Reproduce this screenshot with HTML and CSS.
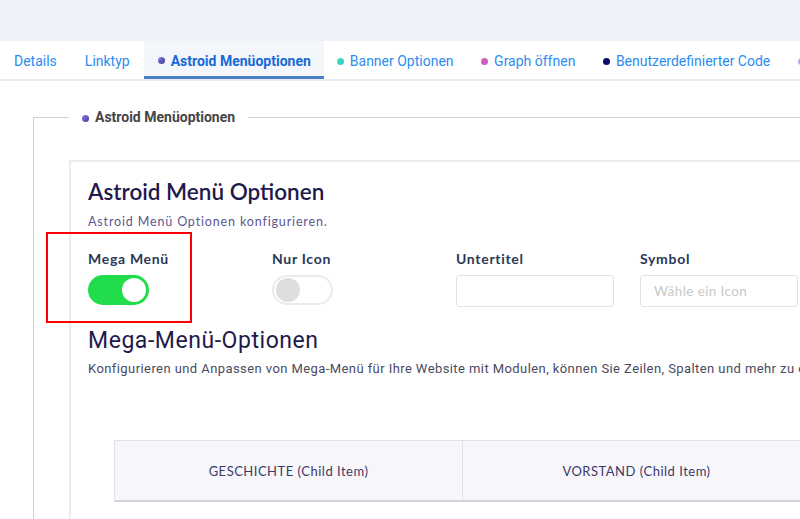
FILE: index.html
```html
<!DOCTYPE html>
<html lang="de">
<head>
  <meta charset="UTF-8" />
  <meta name="viewport" content="width=device-width, initial-scale=1" />
  <title>Menüeintrag bearbeiten</title>
  <link rel="stylesheet" href="styles.css">
</head>
<body>
  <div class="topbar"></div>

  <nav class="tabs">
    <a class="tab">Details</a>
    <a class="tab">Linktyp</a>
    <a class="tab active"><span class="dot dot-astroid"></span>Astroid Menüoptionen</a>
    <a class="tab"><span class="dot dot-banner"></span>Banner Optionen</a>
    <a class="tab"><span class="dot dot-graph"></span>Graph öffnen</a>
    <a class="tab"><span class="dot dot-code"></span>Benutzerdefinierter Code</a>
    <a class="tab"><span class="dot dot-more"></span>Modulzuweisung</a>
  </nav>

  <fieldset class="options">
    <legend><span class="dot dot-astroid"></span>Astroid Menüoptionen</legend>

    <div class="card">
      <h2 class="card-title">Astroid Menü Optionen</h2>
      <p class="card-desc">Astroid Menü Optionen konfigurieren.</p>

      <div class="form-row">
        <div class="field">
          <label>Mega Menü</label>
          <span class="switch on"><span class="knob"></span></span>
          <div class="highlight"></div>
        </div>
        <div class="field">
          <label>Nur Icon</label>
          <span class="switch"><span class="knob"></span></span>
        </div>
        <div class="field">
          <label for="subtitle">Untertitel</label>
          <input type="text" id="subtitle" />
        </div>
        <div class="field">
          <label for="icon">Symbol</label>
          <input type="text" id="icon" placeholder="Wähle ein Icon" />
        </div>
      </div>

      <h2 class="mega-title">Mega-Menü-Optionen</h2>
      <p class="mega-desc">Konfigurieren und Anpassen von Mega-Menü für Ihre Website mit Modulen, können Sie Zeilen, Spalten und mehr zu erstellen.</p>

      <div class="mega-row">
        <div class="mega-cell">GESCHICHTE (Child Item)</div>
        <div class="mega-cell">VORSTAND (Child Item)</div>
      </div>
    </div>
  </fieldset>
</body>
</html>
```

FILE: styles.css
```css
* {
  box-sizing: border-box;
}

html, body {
  overflow: hidden;
}

body {
  margin: 0;
  background: #fff;
  font-family: Roboto, "Liberation Sans", sans-serif;
  width: 1200px;
}

.topbar {
  height: 41px;
  background: #edf1f8;
}

.tabs {
  display: flex;
  height: 40px;
  border-bottom: 2px solid #e9eef3;
}

.tab {
  display: flex;
  align-items: center;
  padding: 2px 14px 0;
  font-size: 14px;
  color: #2d8cf0;
  white-space: nowrap;
  cursor: pointer;
}

.tab.active {
  background: #f3f6fa;
  color: #1769d6;
  font-weight: 700;
  border-bottom: 3px solid #4a80c9;
  padding: 4px 13px 0 14px;
}

.tab.active ~ .tab {
  padding: 2px 14.5px 0 13px;
}

.dot {
  display: inline-block;
  width: 7px;
  height: 7px;
  border-radius: 50%;
  margin-right: 6px;
}

.dot-astroid { background: linear-gradient(135deg, #8a7fe0, #3f3a9a); }
.dot-banner { background: linear-gradient(135deg, #3ee6b0, #30c8d8); }
.dot-graph { background: linear-gradient(135deg, #ee5f9c, #b05fe0); }
.dot-code { background: #0b0a6c; }
.dot-more { background: #b9a8f2; }

.options {
  margin: 28px 0 0 33px;
  padding: 0 0 0 35px;
  border: 1px solid #ccd3dc;
  border-right: none;
  border-bottom: none;
  min-height: 500px;
}

.options legend {
  padding: 0 13px;
  font-size: 14px;
  font-weight: 700;
  color: #454545;
}

.card {
  margin-top: 35px;
  border: 2px solid #ececec;
  border-right: none;
  padding: 15px 17px 40px;
  font-family: Lato, "Open Sans", sans-serif;
  min-height: 400px;
}

.card-title {
  margin: 0;
  font-size: 22.5px;
  font-weight: 600;
  color: #1f1a4c;
  line-height: 30px;
}

.card-desc {
  margin: 7px 0 0;
  font-size: 12.5px;
  letter-spacing: 0.85px;
  color: #5b5790;
}

.form-row {
  display: grid;
  grid-template-columns: repeat(4, 158px);
  column-gap: 26px;
  margin-top: 21px;
}

.field {
  position: relative;
  display: flex;
  flex-direction: column;
  align-items: flex-start;
}

.field label {
  font-size: 14px;
  font-weight: 700;
  color: #2b3856;
  letter-spacing: 0.7px;
  margin-bottom: 8px;
}

.switch {
  position: relative;
  display: block;
  width: 61px;
  height: 30px;
  border-radius: 15px;
  background: #fff;
  border: 2px solid #ebebeb;
}

.switch .knob {
  position: absolute;
  top: 1px;
  left: 2px;
  width: 24px;
  height: 24px;
  border-radius: 50%;
  background: #dedede;
}

.switch.on {
  background: #22dd4b;
  border-color: #22dd4b;
}

.switch.on .knob {
  left: auto;
  right: 1px;
  background: #fff;
}

.field input {
  width: 100%;
  height: 32px;
  border: 1px solid #e2e2e2;
  border-radius: 3px;
  padding: 0 13px;
  font-family: Lato, "Open Sans", sans-serif;
  font-size: 13.5px;
  letter-spacing: 0.4px;
}

.field input::placeholder {
  color: #c9c9c9;
}

.highlight {
  position: absolute;
  left: -42px;
  top: -18px;
  width: 146px;
  height: 91px;
  border: 2px solid #ff0000;
  pointer-events: none;
}

.mega-title {
  margin: 19px 0 0;
  font-family: Roboto, sans-serif;
  font-size: 23px;
  letter-spacing: 0.55px;
  font-weight: 400;
  color: #1f1a4c;
  line-height: 30px;
}

.mega-desc {
  margin: 5px 0 0;
  font-family: Roboto, sans-serif;
  font-size: 13px;
  letter-spacing: 0.42px;
  color: #4a4a60;
  white-space: nowrap;
}

.mega-row {
  display: flex;
  margin: 64px 0 0 26px;
  background: #f6f6fb;
  border: 1px solid #e1e1e6;
  border-bottom: 2px solid #d4d4da;
  height: 62px;
}

.mega-cell {
  width: 348px;
  display: flex;
  align-items: center;
  justify-content: center;
  font-size: 13px;
  letter-spacing: 0.5px;
  color: #3c3a68;
  border-right: 1px solid #e1e1e6;
}
```
